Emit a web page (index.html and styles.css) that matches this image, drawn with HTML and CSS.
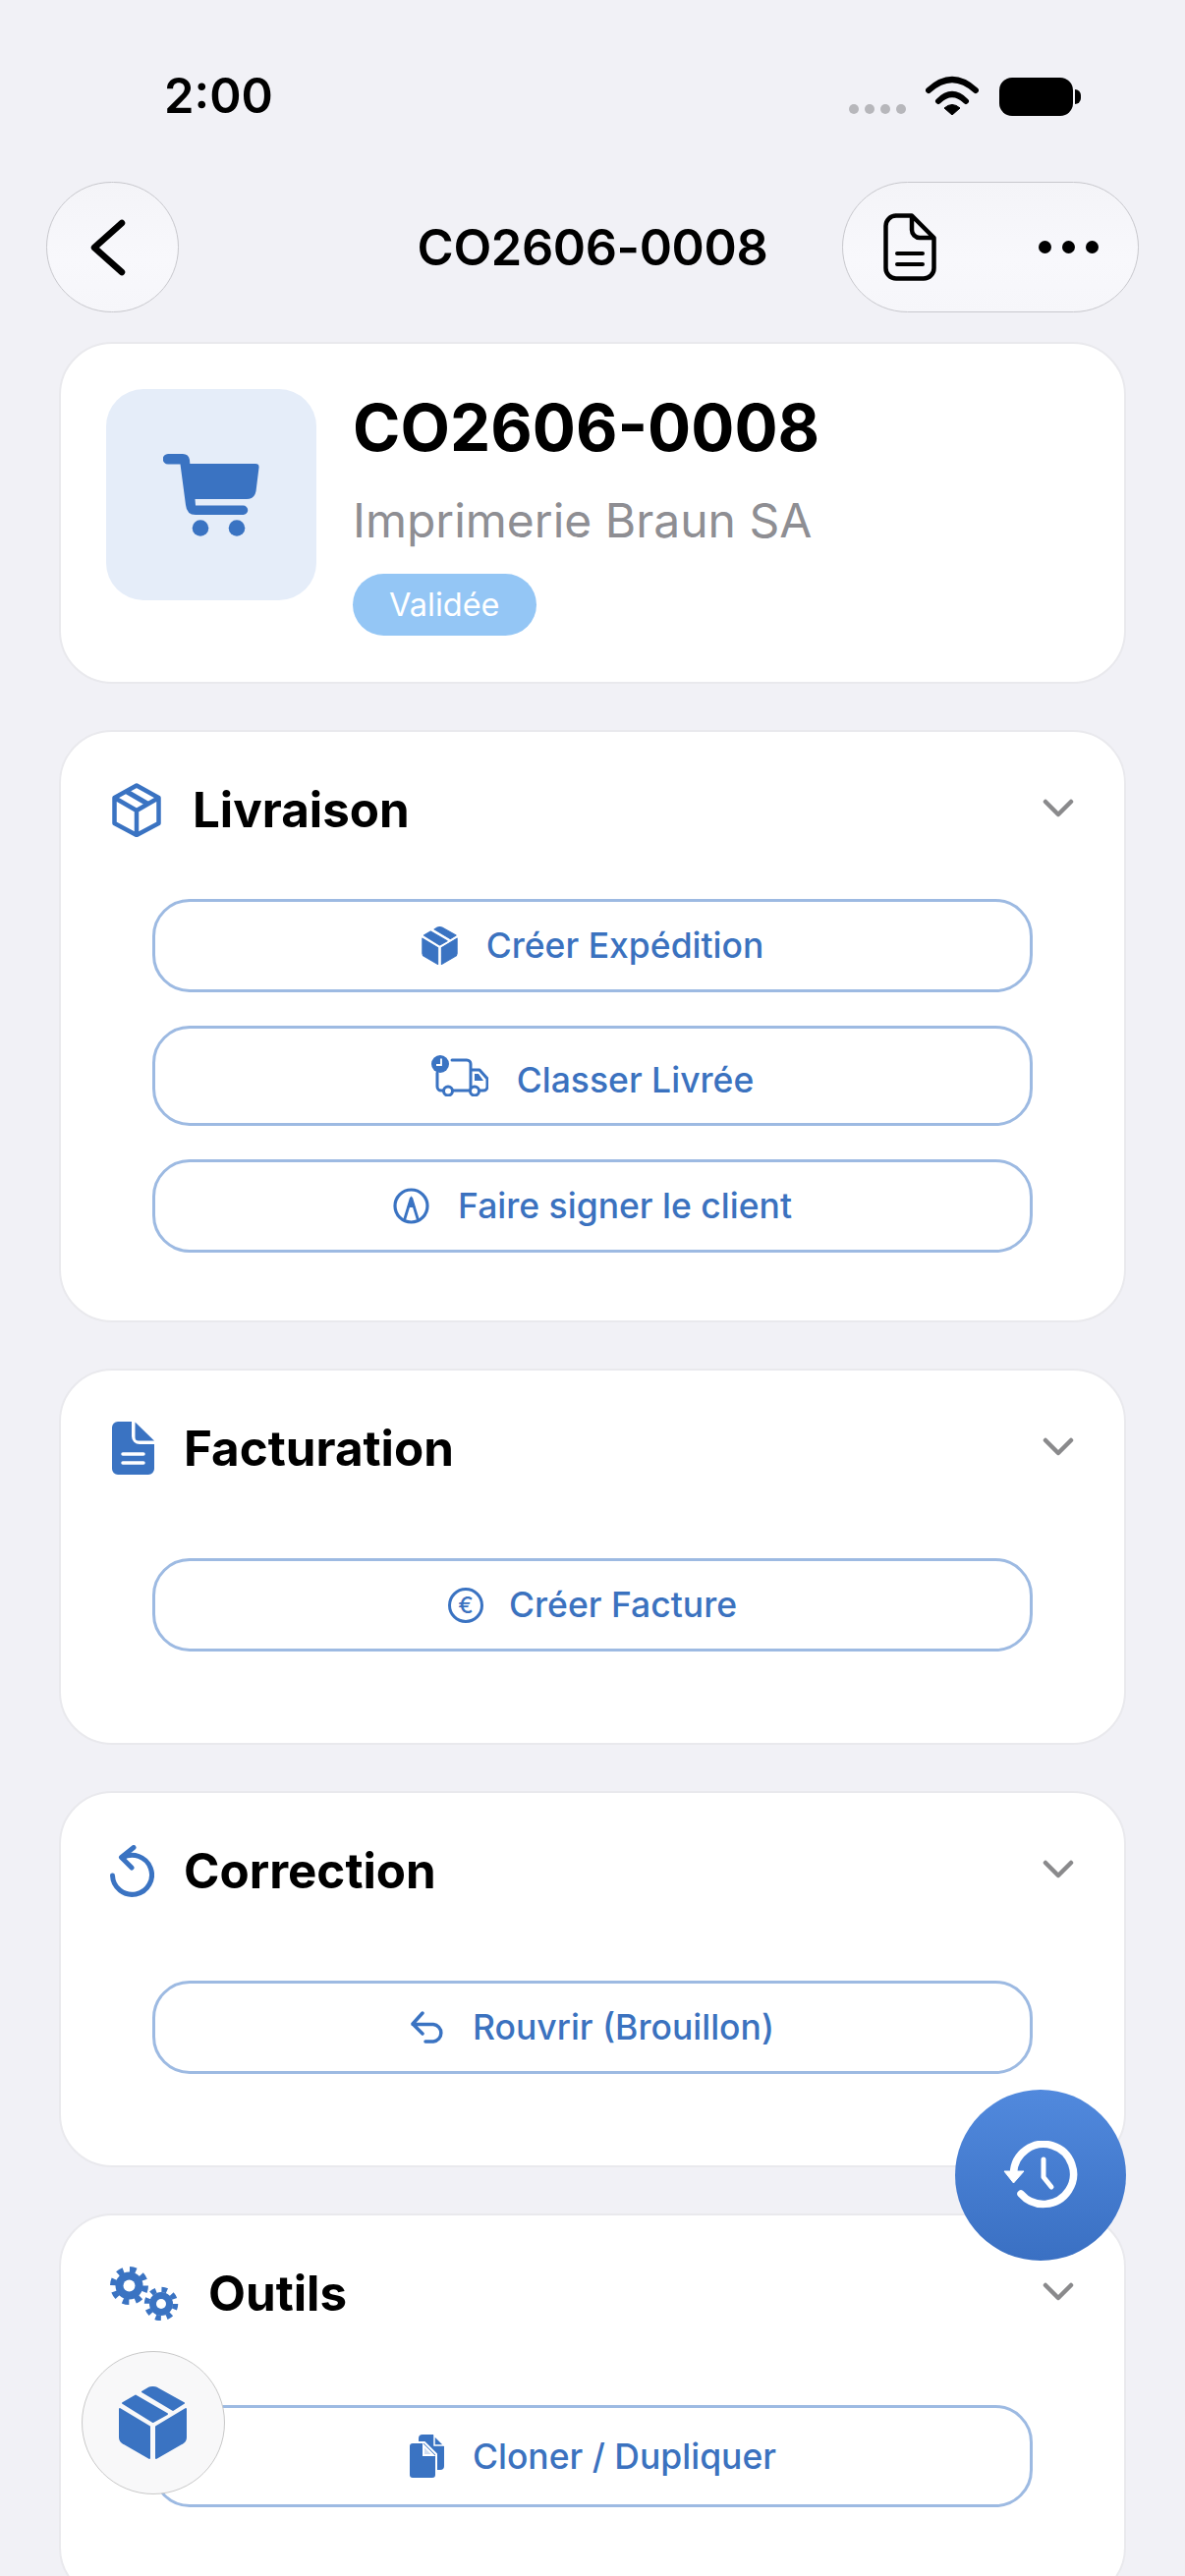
FILE: index.html
```html
<!DOCTYPE html>
<html lang="fr">
<head>
<meta charset="utf-8">
<title>CO2606-0008</title>
<link rel="stylesheet" href="styles.css">
</head>
<body>
<div class="phone">
  <header class="status">
    <span class="time">2:00</span>
    <div class="status-icons">
      <div class="signal"><i></i><i></i><i></i><i></i></div>
      <svg class="wifi" viewBox="0 0 54 40"><path d="M3 15Q27-7 51 15M13 26Q27 12 41 26" fill="none" stroke="#000" stroke-width="6" stroke-linecap="round"/><path d="M19 33Q27 26 35 33L27 40Z" fill="#000" stroke="#000" stroke-linejoin="round"/></svg>
      <div class="battery"></div>
    </div>
  </header>

  <nav class="nav">
    <button class="glass back"><svg class="ic-back" viewBox="0 0 36 58"><path d="M32 4L4 29L32 54" fill="none" stroke="#000" stroke-width="6.500" stroke-linecap="round" stroke-linejoin="round"/></svg></button>
    <h1 class="nav-title">CO2606-0008</h1>
    <div class="glass pill">
      <svg class="ic-doc" viewBox="0 0 54 69"><path d="M12 2.5H29L51.5 25V56a10.500 10.500 0 0 1-10.500 10.500H13A10.500 10.500 0 0 1 2.500 56V13A10.500 10.500 0 0 1 13 2.500Z M29 2.500V17a8 8 0 0 0 8 8H51.500" fill="none" stroke="#000" stroke-width="4.500" stroke-linejoin="round"/><path d="M14 41H40M14 52H40" stroke="#000" stroke-width="4" stroke-linecap="round"/></svg>
      <div class="more"><i></i><i></i><i></i></div>
    </div>
  </nav>

  <main class="content">
    <section class="card hero">
      <div class="hero-icon">
        <svg class="ic-cart" viewBox="0 0 98 84"><path d="M5 0H20Q26 0 27 6L27.300 10H94Q98 10 97.500 14L94.500 38Q93 46 85 46H32.500L33 52.500H81.500a4.750 4.750 0 0 1 0 9.500H33Q24 62 23 52L17.500 10.500H5A5.200 5.200 0 0 1 5 0Z" fill="#3a73c2"/><circle cx="38" cy="75.500" r="8.300" fill="#3a73c2"/><circle cx="75" cy="75.500" r="8.300" fill="#3a73c2"/></svg>
      </div>
      <div class="hero-text">
        <h2 class="hero-title">CO2606-0008</h2>
        <p class="hero-sub">Imprimerie Braun SA</p>
        <span class="badge">Validée</span>
      </div>
    </section>

    <section class="card">
      <div class="head">
        <svg class="ic-h ic-liv" viewBox="-2 0 54 55"><path d="M25 2.500L47.500 15V41L25 53L2.500 41V15Z M2.500 15L25 28L47.500 15 M25 28V53" fill="none" stroke="#3a73c2" stroke-width="4.500" stroke-linejoin="round"/><path d="M14.500 8.500L36 21" stroke="#3a73c2" stroke-width="5"/></svg>
        <h3 class="head-title">Livraison</h3>
        <svg class="chev" viewBox="0 0 32 19"><path d="M3 3L16 16L29 3" fill="none" stroke="#8a8a8c" stroke-width="4.500" stroke-linecap="round" stroke-linejoin="round"/></svg>
      </div>
      <div class="actions">
        <button class="btn">
          <svg class="ic-b-box" viewBox="0 0 69 74"><use href="#box"/></svg>
          <span>Créer Expédition</span>
        </button>
        <button class="btn btn-tall">
          <svg class="ic-b-truck" viewBox="0 0 58 42"><path d="M21 5H36a4 4 0 0 1 4 4V36M6 18V32a4 4 0 0 0 4 4h2M22 36H39M49 36h4a4 4 0 0 0 4-4V24L49 15H40" fill="none" stroke="#3a73c2" stroke-width="3" stroke-linecap="round" stroke-linejoin="round"/><path d="M44 19h4l5 7h-9Z" fill="#3a73c2"/><circle cx="17" cy="36.500" r="4.500" fill="#fff" stroke="#3a73c2" stroke-width="3"/><circle cx="44" cy="36.500" r="4.500" fill="#fff" stroke="#3a73c2" stroke-width="3"/><circle cx="9" cy="9" r="9" fill="#3a73c2"/><path d="M10 3.500V10H5" fill="none" stroke="#fff" stroke-width="1.800"/></svg>
          <span class="btn-low">Classer Livrée</span>
        </button>
        <button class="btn">
          <svg class="ic-b-pen" viewBox="0 0 37 37"><circle cx="18.500" cy="18.500" r="16.500" fill="none" stroke="#3a73c2" stroke-width="3.200"/><path d="M18.500 10L11.500 33M18.500 10L25.500 33" fill="none" stroke="#3a73c2" stroke-width="2.800"/><path d="M18.500 8L14.500 20H22.500Z" fill="#3a73c2"/></svg>
          <span>Faire signer le client</span>
        </button>
      </div>
    </section>

    <section class="card">
      <div class="head">
        <svg class="ic-h ic-fac" viewBox="-2 0 45 54"><path d="M6 0H20V15a8 8 0 0 0 8 8H43V48a6 6 0 0 1-6 6H6a6 6 0 0 1-6-6V6a6 6 0 0 1 6-6Z" fill="#3a73c2"/><path d="M23.500 .5L43 19.500H27a3.500 3.500 0 0 1-3.500-3.500Z" fill="#3a73c2"/><path d="M11 33H32M11 42H32" stroke="#fff" stroke-width="3.500" stroke-linecap="round"/></svg>
        <h3 class="head-title">Facturation</h3>
        <svg class="chev" viewBox="0 0 32 19"><path d="M3 3L16 16L29 3" fill="none" stroke="#8a8a8c" stroke-width="4.500" stroke-linecap="round" stroke-linejoin="round"/></svg>
      </div>
      <div class="actions single">
        <button class="btn">
          <span class="euro">€</span>
          <span>Créer Facture</span>
        </button>
      </div>
    </section>

    <section class="card">
      <div class="head">
        <svg class="ic-h ic-cor" viewBox="0 0 45 53"><path d="M12.500 13A20 20 0 1 1 2.500 31" fill="none" stroke="#3a73c2" stroke-width="5" stroke-linecap="round"/><path d="M24 2.500L11.500 12.500L22 23" fill="none" stroke="#3a73c2" stroke-width="5" stroke-linecap="round" stroke-linejoin="round"/></svg>
        <h3 class="head-title">Correction</h3>
        <svg class="chev" viewBox="0 0 32 19"><path d="M3 3L16 16L29 3" fill="none" stroke="#8a8a8c" stroke-width="4.500" stroke-linecap="round" stroke-linejoin="round"/></svg>
      </div>
      <div class="actions single">
        <button class="btn">
          <svg class="ic-b-undo" viewBox="0 0 34 33"><path d="M12 2L2 13L12 23M2 13.500H23a8.800 8.800 0 0 1 0 17.500H15" fill="none" stroke="#3a73c2" stroke-width="3.500" stroke-linecap="round" stroke-linejoin="round"/></svg>
          <span>Rouvrir (Brouillon)</span>
        </button>
      </div>
    </section>

    <section class="card">
      <div class="head">
        <svg class="ic-h ic-out" viewBox="0 0 70 55"><circle cx="19.500" cy="19.500" r="14" fill="#3a73c2"/><circle cx="19.500" cy="19.500" r="16.500" fill="none" stroke="#3a73c2" stroke-width="6" stroke-dasharray="6.500 6.460"/><circle cx="19.500" cy="19.500" r="6" fill="#fff"/><circle cx="52" cy="38" r="12" fill="#3a73c2"/><circle cx="52" cy="38" r="14.500" fill="none" stroke="#3a73c2" stroke-width="5.500" stroke-dasharray="5.600 5.790"/><circle cx="52" cy="38" r="5" fill="#fff"/></svg>
        <h3 class="head-title">Outils</h3>
        <svg class="chev" viewBox="0 0 32 19"><path d="M3 3L16 16L29 3" fill="none" stroke="#8a8a8c" stroke-width="4.500" stroke-linecap="round" stroke-linejoin="round"/></svg>
      </div>
      <div class="actions single">
        <button class="btn btn-xl">
          <svg class="ic-b-clone" viewBox="0 0 36 45"><path d="M14 0H25L36 12V32a4 4 0 0 1-4 4H14a4 4 0 0 1-4-4V4a4 4 0 0 1 4-4Z" fill="#3a73c2"/><path d="M4 8H16L28 20V41a4 4 0 0 1-4 4H4a4 4 0 0 1-4-4V12a4 4 0 0 1 4-4Z" fill="#3a73c2" stroke="#fff" stroke-width="2"/><path d="M15 11L25 21H15Z" fill="#cfdcf0" stroke="#fff" stroke-width="2"/><path d="M26 1L36 11H26Z" fill="#3a73c2" stroke="#fff" stroke-width="1.500"/></svg>
          <span>Cloner / Dupliquer</span>
        </button>
      </div>
    </section>
  </main>

  <button class="fab-box">
    <svg class="ic-fab-box" viewBox="0 0 69 74"><use href="#box"/></svg>
  </button>
  <button class="fab-history">
    <svg class="ic-history" viewBox="0 0 76 70"><path d="M10.500 33A30.500 30.500 0 1 1 18 54" fill="none" stroke="#fff" stroke-width="7.500" stroke-linecap="round"/><path d="M1 31H21L10.500 43Z" fill="#fff" stroke="#fff" stroke-linejoin="round"/><path d="M41 19V37L49 47" fill="none" stroke="#fff" stroke-width="5" stroke-linecap="round" stroke-linejoin="round"/></svg>
  </button>

  <svg class="defs" width="0" height="0">
    <defs>
      <g id="box" fill="#3a73c2" stroke="#3a73c2" stroke-width="2" stroke-linejoin="round">
        <path d="M1 23L31 41V73L5 58Q1 56 1 52Z"/>
        <path d="M68 23L38 41V73L64 58Q68 56 68 52Z"/>
        <path d="M4 17L17 9.500L49 28L34.500 36Z"/>
        <path d="M24 5.500L30 2Q34.500 0 39 2L66 17L55 24Z"/>
      </g>
    </defs>
  </svg>
</div>
</body>
</html>
```

FILE: styles.css
```css
* { box-sizing: border-box; }

html, body {
  margin: 0;
  height: 2622px;
  overflow: hidden;
  background: #f1f1f6;
}

body {
  font-family: Inter, "Noto Sans", "Liberation Sans", sans-serif;
  color: #000;
}

h1, h2, h3, p { margin: 0; }

button {
  font: inherit;
  background: none;
  padding: 0;
}

.phone {
  position: relative;
  width: 1206px;
  height: 2622px;
  overflow: hidden;
}

/* status bar */
.status {
  display: flex;
  justify-content: space-between;
  align-items: flex-start;
  height: 185px;
  padding: 67px 114px 0 167px;
}

.time {
  font-size: 49px;
  line-height: 62px;
  font-weight: 600;
}

.status-icons {
  display: flex;
  align-items: flex-start;
  padding-top: 10px;
}

.signal {
  display: flex;
  gap: 6px;
  margin: 29px 20px 0 0;
}

.signal i {
  width: 10px;
  height: 10px;
  border-radius: 50%;
  background: #b7b7bb;
}

.wifi {
  width: 54px;
  height: 40px;
  margin-right: 21px;
}

.battery {
  position: relative;
  width: 75px;
  height: 39px;
  margin-top: 2px;
  border-radius: 13px;
  background: #000;
}

.battery::after {
  content: "";
  position: absolute;
  right: -8px;
  top: 12px;
  width: 6px;
  height: 15px;
  border-radius: 0 6px 6px 0;
  background: #000;
}

/* nav */
.nav {
  display: grid;
  grid-template-columns: 1fr auto 1fr;
  align-items: center;
  height: 133px;
  padding: 0 47px;
}

.glass {
  display: flex;
  align-items: center;
  height: 133px;
  border: 1.500px solid #c8c8cd;
  border-radius: 67px;
  background: linear-gradient(180deg, #f4f4f8 0%, #f8f8fc 60%, #f6f6fa 100%);
}

.back {
  justify-content: center;
  justify-self: start;
  width: 135px;
  padding-right: 10px;
}

.ic-back { width: 36px; height: 58px; }

.nav-title {
  font-size: 50.500px;
  line-height: 62px;
  font-weight: 600;
  letter-spacing: -0.4px;
}

.pill {
  justify-self: end;
  justify-content: space-between;
  width: 302px;
  padding: 0 40px 0 41px;
}

.ic-doc { width: 54px; height: 69px; }

.more { display: flex; gap: 11px; }

.more i {
  width: 13px;
  height: 13px;
  border-radius: 50%;
  background: #000;
}

/* cards */
.content {
  display: flex;
  flex-direction: column;
  gap: 47px;
  padding: 30px 60px 0;
}

.card {
  flex: none;
  border: 2px solid #e9e9ed;
  border-radius: 54px;
  background: #fff;
}

.hero {
  display: flex;
  align-items: flex-start;
  gap: 37px;
  height: 348px;
  padding: 46px 46px;
}

.hero-icon {
  display: flex;
  flex: none;
  align-items: center;
  justify-content: center;
  width: 214px;
  height: 215px;
  border-radius: 38px;
  background: #e5edf9;
}

.ic-cart { width: 98px; height: 84px; }

.hero-text {
  display: flex;
  flex-direction: column;
  align-items: flex-start;
}

.hero-title {
  margin-top: 1px;
  font-size: 65.500px;
  line-height: 78px;
  font-weight: 700;
}

.hero-sub {
  margin-top: 26px;
  font-size: 48px;
  line-height: 58px;
  color: #8e8e93;
}

.badge {
  margin-top: 25px;
  padding: 0 37px;
  font-size: 32.500px;
  line-height: 63px;
  font-weight: 400;
  color: #fff;
  border-radius: 32px;
  background: #94c6f5;
}

.head {
  display: flex;
  align-items: center;
  gap: 30px;
  height: 158px;
  padding: 0 51px 0 50px;
}

.ic-h { flex: none; }
.ic-liv { width: 54px; height: 55px; }
.ic-fac { width: 45px; height: 54px; }
.ic-cor { width: 45px; height: 53px; }
.ic-out { width: 70px; height: 55px; }

.head-title {
  flex: 1;
  font-size: 49.300px;
  line-height: 62px;
  font-weight: 700;
}

.chev {
  flex: none;
  width: 32px;
  height: 19px;
  margin-bottom: 3px;
}

.actions {
  display: flex;
  flex-direction: column;
  gap: 34px;
  padding: 12px 93px 69px;
}

.actions.single {
  padding-top: 33px;
  padding-bottom: 93px;
}

.btn {
  display: flex;
  align-items: center;
  justify-content: center;
  gap: 29px;
  height: 95px;
  font-size: 35.500px;
  font-weight: 450;
  color: #3b72bf;
  border: 3px solid #9dbae2;
  border-radius: 38px;
  background: #fff;
}

.btn-tall { height: 102px; }

.btn-xl {
  height: 104px;
  margin-top: 2px;
}

.btn-low { margin-top: 8px; }

.ic-b-box { width: 37px; height: 39px; }
.ic-b-truck { width: 58px; height: 42px; }
.ic-b-pen { width: 37px; height: 37px; }
.ic-b-undo { width: 34px; height: 33px; }
.ic-b-clone { width: 36px; height: 45px; }

.euro {
  display: flex;
  align-items: center;
  justify-content: center;
  width: 36px;
  height: 36px;
  margin-right: -3px;
  font-size: 23px;
  border: 3px solid #3a73c2;
  border-radius: 50%;
}

/* floating buttons */
.fab-box {
  position: absolute;
  left: 83px;
  top: 2393px;
  display: flex;
  align-items: center;
  justify-content: center;
  width: 146px;
  height: 146px;
  padding-right: 2px;
  border: 1.500px solid #c9c9c9;
  border-radius: 50%;
  background: #f8f8f9;
}

.ic-fab-box { width: 69px; height: 74px; }

.fab-history {
  position: absolute;
  left: 972px;
  top: 2127px;
  display: flex;
  align-items: center;
  justify-content: center;
  width: 174px;
  height: 174px;
  border: 0;
  border-radius: 50%;
  background: linear-gradient(180deg, #5189dd 0%, #3a70c3 100%);
}

.ic-history { width: 76px; height: 70px; }

.defs { position: absolute; }
```
